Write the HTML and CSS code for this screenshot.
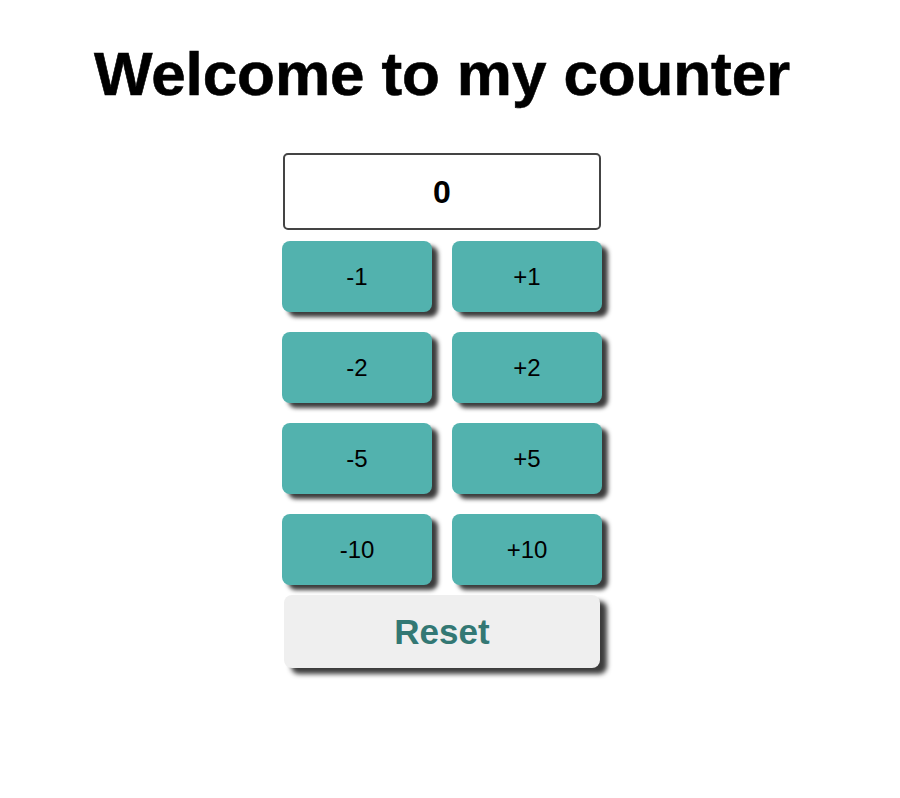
FILE: index.html
```html
<!DOCTYPE html>
<html>
<head>
<meta charset="utf-8">
<link rel="stylesheet" href="styles.css">
</head>
<body>
<div class="page">
  <h1 class="title">Welcome to my counter</h1>
  <div class="counter">
    <div class="display">0</div>
    <div class="grid">
      <button class="btn">-1</button>
      <button class="btn">+1</button>
      <button class="btn">-2</button>
      <button class="btn">+2</button>
      <button class="btn">-5</button>
      <button class="btn">+5</button>
      <button class="btn">-10</button>
      <button class="btn">+10</button>
    </div>
    <button class="reset">Reset</button>
  </div>
</div>
</body>
</html>
```

FILE: styles.css
```css
html, body {
  margin: 0;
  padding: 0;
  background: #ffffff;
}
.page {
  width: 884px;
  padding-bottom: 60px;
  display: flex;
  flex-direction: column;
  align-items: center;
  font-family: "Liberation Sans", Arial, sans-serif;
}
.title {
  margin: 38px 0 0;
  font-size: 62px;
  line-height: 71px;
  font-weight: 700;
  color: #000;
  letter-spacing: -0.1px;
  -webkit-text-stroke: 0.6px #000;
}
.counter {
  margin-top: 44px;
  width: 320px;
  display: flex;
  flex-direction: column;
  align-items: center;
}
.display {
  box-sizing: border-box;
  width: 318px;
  height: 77px;
  border: 2px solid #444;
  border-radius: 5px;
  display: flex;
  align-items: center;
  justify-content: center;
  padding-top: 2px;
  font-size: 32px;
  font-weight: 700;
  color: #000;
}
.grid {
  margin-top: 11px;
  display: grid;
  grid-template-columns: 150px 150px;
  column-gap: 20px;
  row-gap: 20px;
}
.btn {
  width: 150px;
  height: 71px;
  border: none;
  border-radius: 8px;
  background: #52b2ae;
  color: #000;
  font-family: "Liberation Sans", Arial, sans-serif;
  font-size: 24px;
  padding: 0;
  box-shadow: 6px 5px 4px #3c3c3c;
}
.reset {
  margin-top: 10px;
  width: 316px;
  height: 73px;
  border: none;
  border-radius: 8px;
  background: #efefef;
  color: #337874;
  font-family: "Liberation Sans", Arial, sans-serif;
  font-size: 35px;
  font-weight: 700;
  padding: 0;
  box-shadow: 7px 6px 5px #3c3c3c;
}
```
